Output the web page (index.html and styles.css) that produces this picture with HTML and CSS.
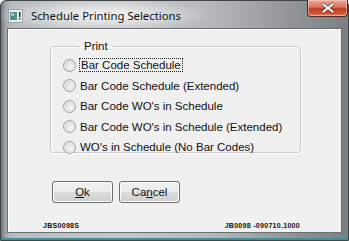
FILE: index.html
```html
<!DOCTYPE html>
<html lang="en">
<head>
  <meta charset="UTF-8" />
  <title>Schedule Printing Selections</title>
  <link rel="stylesheet" href="styles.css">
</head>
<body>
  <div class="window">
    <div class="titlebar">
      <svg class="app-icon" width="15" height="14" viewBox="0 0 15 14">
        <rect x="0.5" y="0.5" width="14" height="13" fill="#e8ecec" stroke="#9aa4a6"/>
        <rect x="2" y="3" width="7" height="8" fill="#4f8f8c"/>
        <rect x="3" y="4" width="3" height="3" fill="#9cc7c2"/>
        <rect x="11" y="3" width="1.5" height="5" fill="#333"/>
        <rect x="11" y="9" width="1.5" height="1.5" fill="#333"/>
      </svg>
      <span class="title">Schedule Printing Selections</span>
      <div class="close-btn">
        <svg width="12" height="10" viewBox="0 0 12 10">
          <path d="M1.5 1.5 L10.5 8.5 M10.5 1.5 L1.5 8.5" stroke="#5a2a20" stroke-width="3.4" stroke-linecap="square"/>
          <path d="M1.5 1.5 L10.5 8.5 M10.5 1.5 L1.5 8.5" stroke="#fff" stroke-width="2" stroke-linecap="square"/>
        </svg>
      </div>
    </div>

    <div class="client">
      <fieldset class="group">
        <legend>Print</legend>
        <label class="option"><span class="radio"></span><span class="focus">Bar Code Schedule</span></label>
        <label class="option"><span class="radio"></span><span>Bar Code Schedule (Extended)</span></label>
        <label class="option"><span class="radio"></span><span>Bar Code WO's in Schedule</span></label>
        <label class="option"><span class="radio"></span><span>Bar Code WO's in Schedule (Extended)</span></label>
        <label class="option"><span class="radio"></span><span>WO's in Schedule (No Bar Codes)</span></label>
      </fieldset>

      <div class="buttons">
        <button><u>O</u>k</button>
        <button>Ca<u>n</u>cel</button>
      </div>

      <div class="footer">
        <span>JBS0098S</span>
        <span>JB0098 -090710.1000</span>
      </div>
    </div>
  </div>
</body>
</html>
```

FILE: styles.css
```css
body {
  margin: 0;
  padding: 0;
  background: #fff;
}

/* Window frame */
.window {
  width: 349px;
  height: 241px;
  box-sizing: border-box;
  border: 1px solid #3f4547;
  border-radius: 6px 6px 0 0;
  background:
    radial-gradient(ellipse 110px 16px at 100px 14px, rgba(255,255,255,0.85), rgba(255,255,255,0) 100%),
    linear-gradient(to right, #6f7375 0px, #9ea2a4 4px, #b9bcbe 10px, #c6c9ca 35%, #b6b9ba 60%, #8f9395 85%, #7b7f81 100%);
  padding: 0 6px 0 6px;
  display: flex;
  flex-direction: column;
  font-family: "Liberation Sans", Arial, sans-serif;
  box-shadow: inset 0 -2px 0 #3f8f98;
}

.titlebar {
  height: 27px;
  display: flex;
  align-items: center;
  position: relative;
}

.app-icon {
  margin: 2px 0 0 1px;
}

.title {
  margin-left: 8px;
  margin-top: 2px;
  font-family: "Noto Sans", "Liberation Sans", sans-serif;
  font-size: 11.3px;
  color: #111;
}

.close-btn {
  position: absolute;
  top: -1px;
  right: -6px;
  width: 41px;
  height: 17px;
  box-sizing: border-box;
  border: 1px solid #4a2a25;
  border-top: none;
  border-radius: 0 0 4px 4px;
  background: linear-gradient(to bottom, #e8a89a 0%, #d7735f 45%, #c0391f 55%, #d0553a 85%, #e28a6b 100%);
  box-shadow: inset 0 0 0 1px rgba(255,210,200,0.55);
  display: flex;
  align-items: center;
  justify-content: center;
}

/* Client area */
.client {
  height: 205px;
  box-sizing: border-box;
  background: #f0f0f0;
  border: 1px solid #6b6f71;
  box-shadow: inset 1px 1px 0 #ffffff;
  position: relative;
}

.group {
  margin: 11px 0 0 42px;
  width: 251px;
  height: 113px;
  box-sizing: border-box;
  border: 1px solid #c8cacb;
  border-radius: 3px;
  padding: 3px 0 0 12px;
  box-shadow: inset 1px 1px 0 #fff, 1px 1px 0 #fff;
}

.group legend {
  margin-left: 16px;
  padding: 0 5px;
  font-size: 11.5px;
  color: #111;
}

.option {
  display: flex;
  align-items: center;
  height: 20.5px;
  font-size: 11.5px;
  color: #111;
}

.radio {
  width: 11px;
  height: 11px;
  border-radius: 50%;
  border: 1px solid #9a9c9d;
  background: radial-gradient(circle at 60% 60%, #f6f6f6 0%, #e2e3e3 45%, #c2c4c5 100%);
  box-shadow: inset 0 0 0 1px #eeeeee;
  margin-right: 4px;
}

.focus {
  outline: 1px dotted #222;
  outline-offset: 0;
  padding: 0 1px;
}

.buttons {
  display: flex;
  gap: 6px;
  margin: 28px 0 0 44px;
}

.buttons button {
  width: 61px;
  height: 22px;
  border: 1px solid #707070;
  border-radius: 3px;
  background: linear-gradient(to bottom, #f2f2f2 0%, #ebebeb 50%, #dddddd 51%, #cfcfcf 100%);
  box-shadow: inset 0 0 0 1px #fcfcfc;
  font-family: "Liberation Sans", Arial, sans-serif;
  font-size: 11.5px;
  color: #111;
  padding: 0;
}

.footer {
  display: flex;
  justify-content: space-between;
  margin: 19px 0 0 35px;
  width: 257px;
  font-family: "Liberation Sans", Arial, sans-serif;
  font-size: 7px;
  font-weight: bold;
  letter-spacing: 0.3px;
  color: #111;
}
```
